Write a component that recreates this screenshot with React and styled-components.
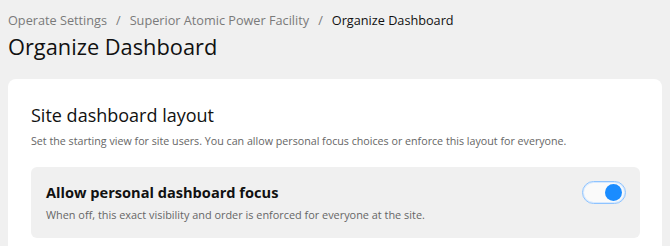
import React, { useState } from "react";
import styled, { createGlobalStyle } from "styled-components";

const GlobalStyle = createGlobalStyle`
  * { box-sizing: border-box; }
  body {
    margin: 0;
    background: #f0f0f0;
    font-family: "Open Sans", "Noto Sans", sans-serif;
    color: #111;
  }
`;

const Page = styled.div`
  padding: 10px 8px 0 8px;
  width: 670px;
  height: 246px;
  overflow: hidden;
`;

const Crumbs = styled.nav`
  display: flex;
  align-items: center;
  gap: 9px;
  font-size: 12.7px;
  line-height: 20px;
  color: #7a7a7a;
`;

const Crumb = styled.span`
  color: ${(p) => (p.$current ? "#111" : "#7a7a7a")};
`;

const Title = styled.h1`
  margin: 2px 0 0 0;
  font-size: 21.8px;
  font-weight: 400;
  line-height: 30px;
  color: #111;
`;

const Card = styled.section`
  margin-top: 17px;
  width: 654px;
  background: #fff;
  border-radius: 8px;
  padding: 22px 22px 24px 23px;
`;

const CardTitle = styled.h2`
  margin: 0;
  font-size: 18px;
  font-weight: 400;
  line-height: 28px;
  color: #111;
`;

const CardDesc = styled.p`
  margin: 3px 0 0 0;
  font-size: 10.7px;
  line-height: 18px;
  color: #666;
`;

const Option = styled.div`
  margin-top: 17px;
  display: flex;
  align-items: flex-start;
  justify-content: space-between;
  background: #f0f0f0;
  border-radius: 6px;
  padding: 14px 14px 14px 15px;
  min-height: 70px;
`;

const OptionText = styled.div`
  display: flex;
  flex-direction: column;
`;

const OptionTitle = styled.div`
  font-size: 14.6px;
  font-weight: 700;
  line-height: 22px;
  color: #111;
`;

const OptionDesc = styled.div`
  margin-top: 3px;
  font-size: 10.9px;
  line-height: 18px;
  color: #666;
`;

const Switch = styled.button`
  position: relative;
  flex: none;
  width: 44px;
  height: 23px;
  padding: 0;
  border-radius: 12px;
  border: 1.5px solid #8ec3ff;
  box-shadow: inset 0 0 0 1px #d6e9ff;
  background: #fafafa;
  cursor: pointer;
`;

const Knob = styled.span`
  position: absolute;
  top: 1.5px;
  left: ${(p) => (p.$on ? "21.5px" : "1.5px")};
  width: 17px;
  height: 17px;
  border-radius: 50%;
  background: ${(p) => (p.$on ? "#1a8cff" : "#bbb")};
`;

export default function App() {
  const [on, setOn] = useState(true);
  return (
    <>
      <GlobalStyle />
      <Page>
        <Crumbs>
          <Crumb>Operate Settings</Crumb>
          <span>/</span>
          <Crumb>Superior Atomic Power Facility</Crumb>
          <span>/</span>
          <Crumb $current>Organize Dashboard</Crumb>
        </Crumbs>
        <Title>Organize Dashboard</Title>
        <Card>
          <CardTitle>Site dashboard layout</CardTitle>
          <CardDesc>
            Set the starting view for site users. You can allow personal focus choices or enforce this layout for everyone.
          </CardDesc>
          <Option>
            <OptionText>
              <OptionTitle>Allow personal dashboard focus</OptionTitle>
              <OptionDesc>
                When off, this exact visibility and order is enforced for everyone at the site.
              </OptionDesc>
            </OptionText>
            <Switch role="switch" aria-checked={on} onClick={() => setOn(!on)}>
              <Knob $on={on} />
            </Switch>
          </Option>
        </Card>
      </Page>
    </>
  );
}
